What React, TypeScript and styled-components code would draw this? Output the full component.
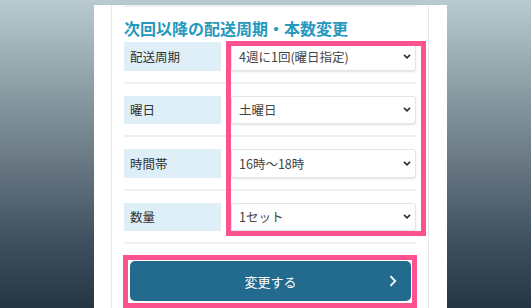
import React from "react";
import styled, { createGlobalStyle } from "styled-components";

const Global = createGlobalStyle`
  html, body {
    margin: 0;
    padding: 0;
    height: 100%;
  }
  body {
    background: linear-gradient(to bottom, #b9cbcf 0%, #8a9ca3 30%, #6d7c86 50%, #3f5060 78%, #253544 100%);
    font-family: "Noto Sans CJK JP", "Noto Sans", sans-serif;
    overflow: hidden;
  }
`;

const Panel = styled.div`
  margin-left: 94px;
  width: 353px;
  height: 308px;
  background: #ffffff;
  box-sizing: border-box;
  padding: 0 18px 0 17px;
`;

const Inner = styled.div`
  height: 100%;
  box-sizing: border-box;
  border-left: 1px solid #e8e8e8;
  border-right: 1px solid #e8e8e8;
  padding: 0 12px;
`;

const TopRule = styled.div`
  margin-top: 5px;
  height: 2px;
  background: #f0f0f0;
`;

const Title = styled.h2`
  margin: 9px 0 2px;
  font-size: 16px;
  line-height: 24px;
  font-weight: 700;
  color: #2598bd;
  letter-spacing: 0;
  white-space: nowrap;
`;

const Rows = styled.div`
  position: relative;
`;

const Row = styled.div`
  display: grid;
  grid-template-columns: 97px 1fr;
  column-gap: 10px;
  padding: 12px 0 11px;
  border-bottom: 2px solid #f0f0f0;
  &:first-child {
    padding-top: 0;
  }
`;

const Label = styled.div`
  height: 28.5px;
  display: flex;
  align-items: center;
  padding-left: 6px;
  background: #dfeff8;
  font-size: 12.5px;
  color: #333;
`;

const Select = styled.div`
  height: 28.5px;
  box-sizing: border-box;
  display: flex;
  align-items: center;
  justify-content: space-between;
  padding: 0 4px 0 7px;
  background: #fff;
  border: 1px solid #e1e4e8;
  border-radius: 3px;
  box-shadow: 0 1px 2px rgba(0, 0, 0, 0.12);
  font-size: 12.5px;
  color: #444;
  white-space: nowrap;
`;

const SelectHighlight = styled.div`
  position: absolute;
  left: 102px;
  top: -1px;
  width: 200px;
  height: 195px;
  box-sizing: border-box;
  border: 5px solid #fc5290;
  pointer-events: none;
`;

const ButtonWrap = styled.div`
  position: relative;
  margin: 17px 5px 0 6px;
`;

const Button = styled.button`
  width: 100%;
  height: 40px;
  display: grid;
  grid-template-columns: 1fr auto 1fr;
  align-items: center;
  padding: 0 14px;
  border: none;
  border-radius: 5px;
  background: #226b8f;
  color: #fff;
  font-family: "Noto Sans CJK JP", "Noto Sans", sans-serif;
  font-size: 13px;
  cursor: pointer;
`;

const ButtonText = styled.span`
  grid-column: 2;
`;

const ButtonIcon = styled.span`
  grid-column: 3;
  justify-self: end;
  display: flex;
`;

const ButtonHighlight = styled.div`
  position: absolute;
  left: -7px;
  top: -6px;
  width: 294px;
  height: 53px;
  box-sizing: border-box;
  border: 5px solid #fc5290;
  pointer-events: none;
`;

const Caret = () => (
  <svg width="8" height="5" viewBox="0 0 8 5">
    <path d="M1 0.8 L4 3.8 L7 0.8" fill="none" stroke="#333" strokeWidth="1.7" />
  </svg>
);

const Chevron = () => (
  <svg width="8" height="12" viewBox="0 0 8 12">
    <path d="M1.5 1.2 L6.2 6 L1.5 10.8" fill="none" stroke="#fff" strokeWidth="1.8" />
  </svg>
);

const rows = [
  { label: "配送周期", value: "4週に1回(曜日指定)" },
  { label: "曜日", value: "土曜日" },
  { label: "時間帯", value: "16時～18時" },
  { label: "数量", value: "1セット" },
];

export default function App() {
  return (
    <>
      <Global />
      <Panel>
        <Inner>
          <TopRule />
          <Title>次回以降の配送周期・本数変更</Title>
          <Rows>
            {rows.map((r) => (
              <Row key={r.label}>
                <Label>{r.label}</Label>
                <Select>
                  <span>{r.value}</span>
                  <Caret />
                </Select>
              </Row>
            ))}
            <SelectHighlight />
          </Rows>
          <ButtonWrap>
            <Button type="button">
              <ButtonText>変更する</ButtonText>
              <ButtonIcon>
                <Chevron />
              </ButtonIcon>
            </Button>
            <ButtonHighlight />
          </ButtonWrap>
        </Inner>
      </Panel>
    </>
  );
}
